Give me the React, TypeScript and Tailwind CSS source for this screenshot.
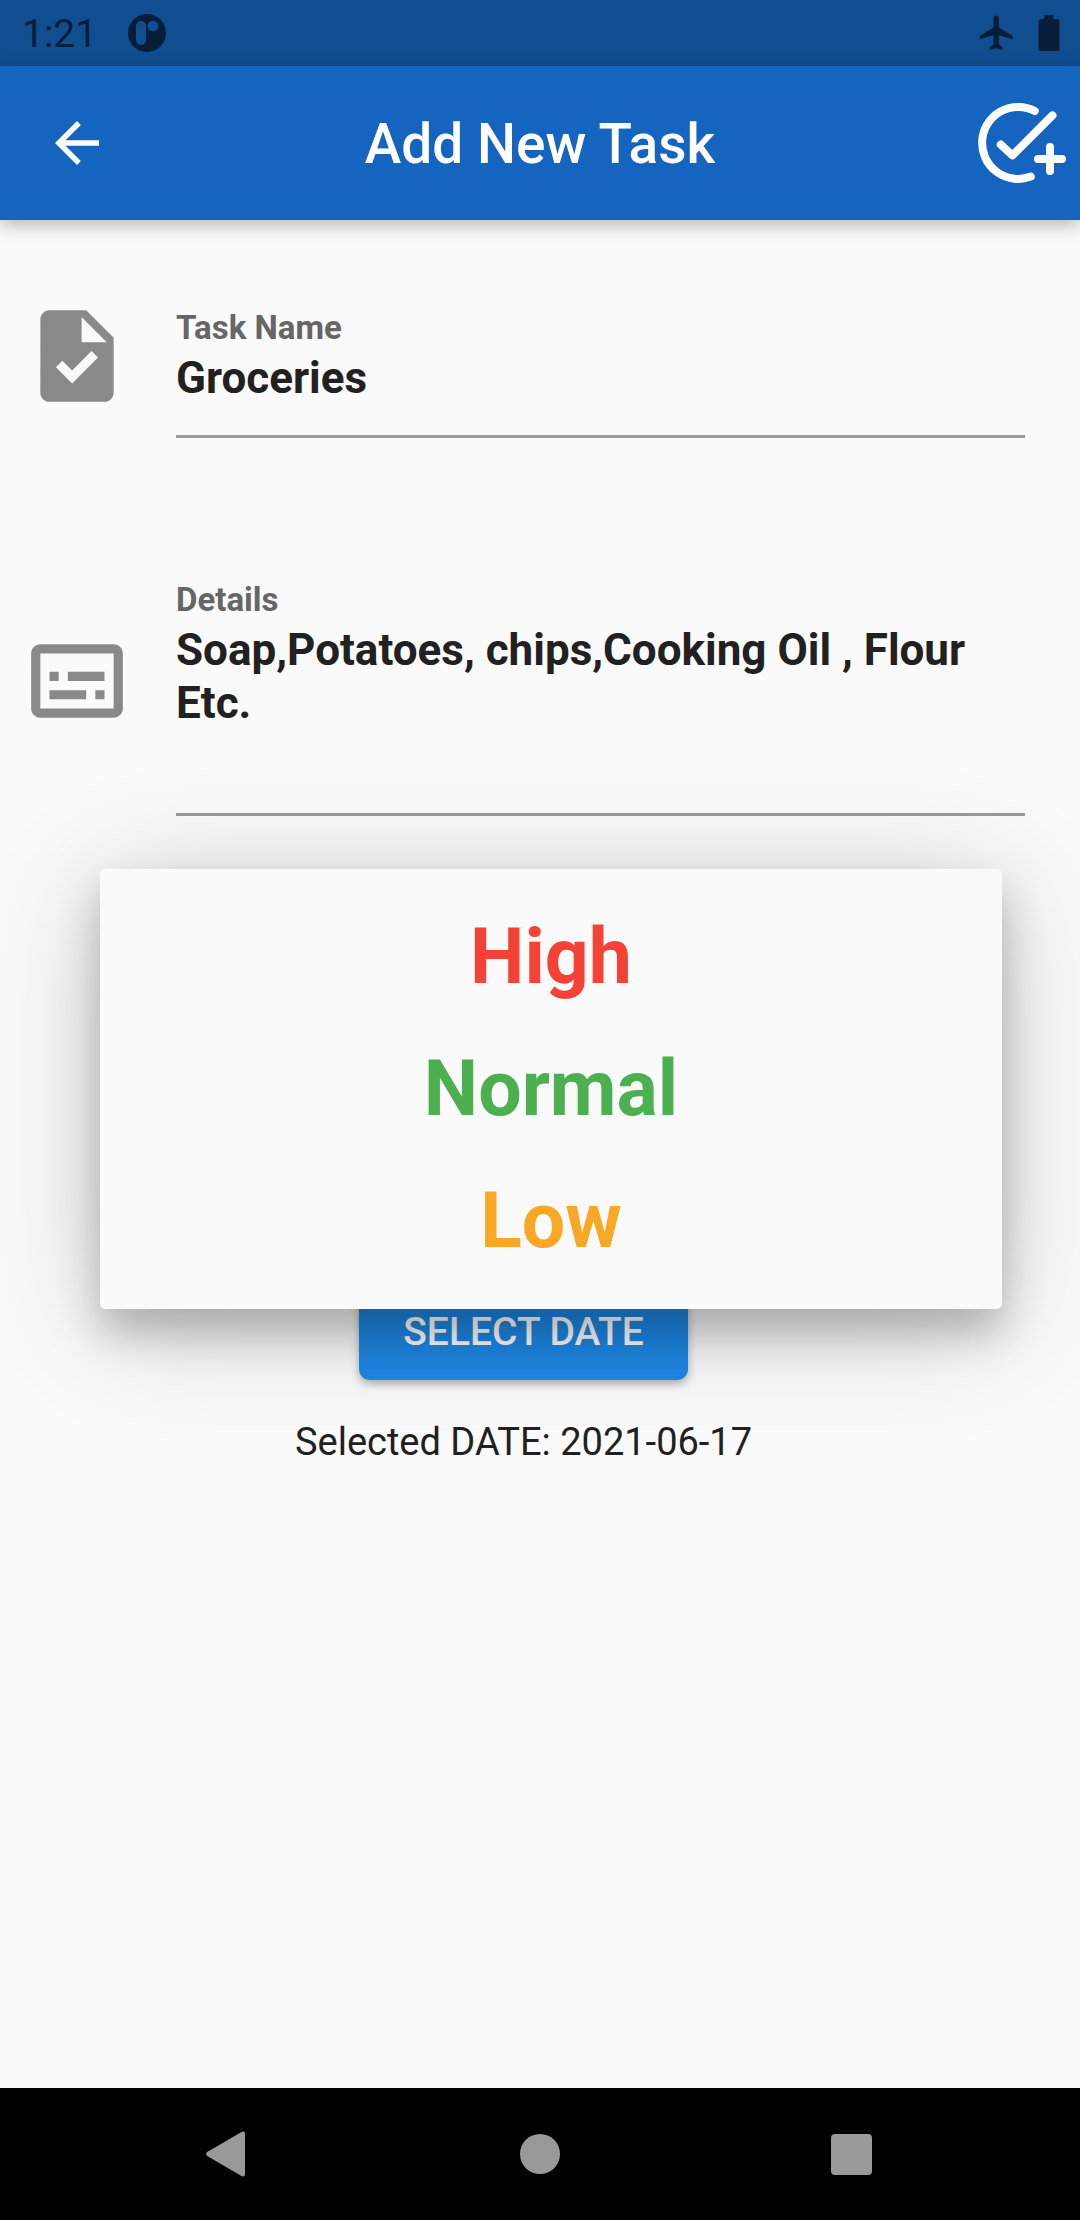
import { MdArrowBack, MdOutlineSubtitles, MdTask } from "react-icons/md";

const priorities = [
  { label: "High", color: "text-[#f44336]" },
  { label: "Normal", color: "text-[#4caf50]" },
  { label: "Low", color: "text-[#f9a825]" },
];

function AddTaskIcon() {
  return (
    <svg
      viewBox="0 0 24 24"
      className="size-24"
      fill="none"
      stroke="currentColor"
      strokeWidth="2"
      strokeLinecap="round"
      strokeLinejoin="round"
    >
      <path d="M16.2 4A9 9 0 1 0 15.2 20.4" />
      <path d="M7.7 12.4L10.6 15.1L20.6 5.1" />
      <path d="M20 13v6M17 16h6" />
    </svg>
  );
}

function StatusBar() {
  return (
    <div className="flex h-[66px] items-center bg-[#104e90] pr-[20px] pl-[22px] text-[#071e3a]">
      <span className="pt-0.5 text-[39px] leading-[46px]">1:21</span>
      <svg viewBox="0 0 38 38" className="ml-[31px] size-[38px]">
        <circle cx="19" cy="19" r="19" fill="currentColor" />
        <rect x="8" y="7" width="10" height="24" rx="5" fill="#104e90" />
        <circle cx="25" cy="12" r="5.3" fill="#104e90" />
      </svg>
      <svg viewBox="0 0 36 36" className="ml-auto size-[36px]" fill="currentColor">
        <path d="M34.600 24.300V20.900L21 12.400V3.400C21 1.700 19.700 .5 18.200 .5S15.400 1.700 15.400 3.400V12.400L1.600 20.900V24.300L15.400 20.200V29.400L11.800 32V35L18.200 33.300L24.600 35V32L21 29.400V20.200Z" />
      </svg>
      <svg viewBox="0 0 22 36" className="ml-[24px] h-[36px] w-[22px]" fill="currentColor">
        <path d="M6.500 0h9v4h4A2 2 0 0 1 21.500 6v28a2 2 0 0 1-2 2h-17a2 2 0 0 1-2-2V6a2 2 0 0 1 2-2h4z" />
      </svg>
    </div>
  );
}

export default function App() {
  return (
    <div className="flex min-h-screen flex-col bg-[#fafafa] font-['Roboto',sans-serif] text-[#212121]">
      <StatusBar />
      <header className="grid h-[154px] grid-cols-[1fr_auto_1fr] items-center bg-[#1565c0] pr-[14px] pl-[44px] text-white shadow-[0_4px_18px_rgba(0,0,0,0.3)]">
        <button type="button" aria-label="Back" className="justify-self-start">
          <MdArrowBack className="size-[66px]" />
        </button>
        <h1 className="-ml-[30px] pt-0.5 text-[55px] leading-[64px] font-medium">Add New Task</h1>
        <button type="button" aria-label="Save task" className="justify-self-end">
          <AddTaskIcon />
        </button>
      </header>

      <main className="flex-1 pt-[54px]">
        <div className="flex items-center gap-[44px] pr-[55px] pl-[22px]">
          <MdTask className="size-[110px] shrink-0 text-[#898989]" />
          <div className="flex flex-1 flex-col border-b-3 border-[#9b9b9b] pt-[34px] pb-[30px]">
            <label htmlFor="task-name" className="mb-[5px] text-[33px] leading-[39px] font-bold text-[#666666]">
              Task Name
            </label>
            <input
              id="task-name"
              type="text"
              defaultValue="Groceries"
              className="h-[53px] w-full bg-transparent text-[44px] leading-[53px] font-bold outline-none"
            />
          </div>
        </div>

        <div className="mt-[108px] flex items-center gap-[44px] pr-[55px] pl-[22px]">
          <MdOutlineSubtitles className="size-[110px] shrink-0 text-[#898989]" />
          <div className="flex flex-1 flex-col border-b-3 border-[#9b9b9b] pt-[34px] pb-[30px]">
            <label htmlFor="details" className="mb-[5px] text-[33px] leading-[39px] font-bold text-[#666666]">
              Details
            </label>
            <textarea
              id="details"
              rows={3}
              defaultValue="Soap,Potatoes, chips,Cooking Oil , Flour Etc."
              className="block w-full resize-none overflow-hidden bg-transparent text-[44px] leading-[53px] font-bold outline-none"
            />
          </div>
        </div>

        <div className="relative z-10 h-[467px]">
          <div
            role="menu"
            aria-label="Priority"
            className="absolute top-[53px] right-[78px] left-[100px] rounded-[5px] bg-[#fafafa] py-[22px] shadow-[0_16px_120px_rgba(0,0,0,0.2),0_24px_40px_rgba(0,0,0,0.22)]"
          >
            {priorities.map((p) => (
              <button
                key={p.label}
                type="button"
                role="menuitem"
                className={`flex h-[132px] w-full items-center justify-center text-[77px] leading-[90px] font-bold ${p.color}`}
              >
                {p.label}
              </button>
            ))}
          </div>
        </div>

        <div className="flex flex-col items-center pr-[33px]">
          <button
            type="button"
            className="h-[97px] rounded-[11px] bg-[#1e88e5] px-[44px] text-[39px] leading-[46px] font-medium text-white shadow-[0_4px_8px_rgba(0,0,0,0.3)]"
          >
            SELECT DATE
          </button>
          <p className="mt-[39px] text-[38px] leading-[46px]">Selected DATE: 2021-06-17</p>
        </div>
      </main>

      <nav className="flex h-[132px] items-center bg-black px-[73px] text-[#999999]">
        <button type="button" aria-label="Back" className="flex flex-1 justify-center">
          <svg viewBox="0 0 46 46" className="size-[46px]" fill="currentColor">
            <path d="M1.200 21L35.500 1Q39 -.5 39 3V43Q39 46.500 35.500 45L1.200 25Q-1 23 1.200 21Z" />
          </svg>
        </button>
        <button type="button" aria-label="Home" className="flex flex-1 justify-center">
          <span className="size-[40px] rounded-full bg-[#999999]" />
        </button>
        <button type="button" aria-label="Recent apps" className="flex flex-1 justify-center">
          <span className="size-[41px] rounded-[4px] bg-[#999999]" />
        </button>
      </nav>
    </div>
  );
}
